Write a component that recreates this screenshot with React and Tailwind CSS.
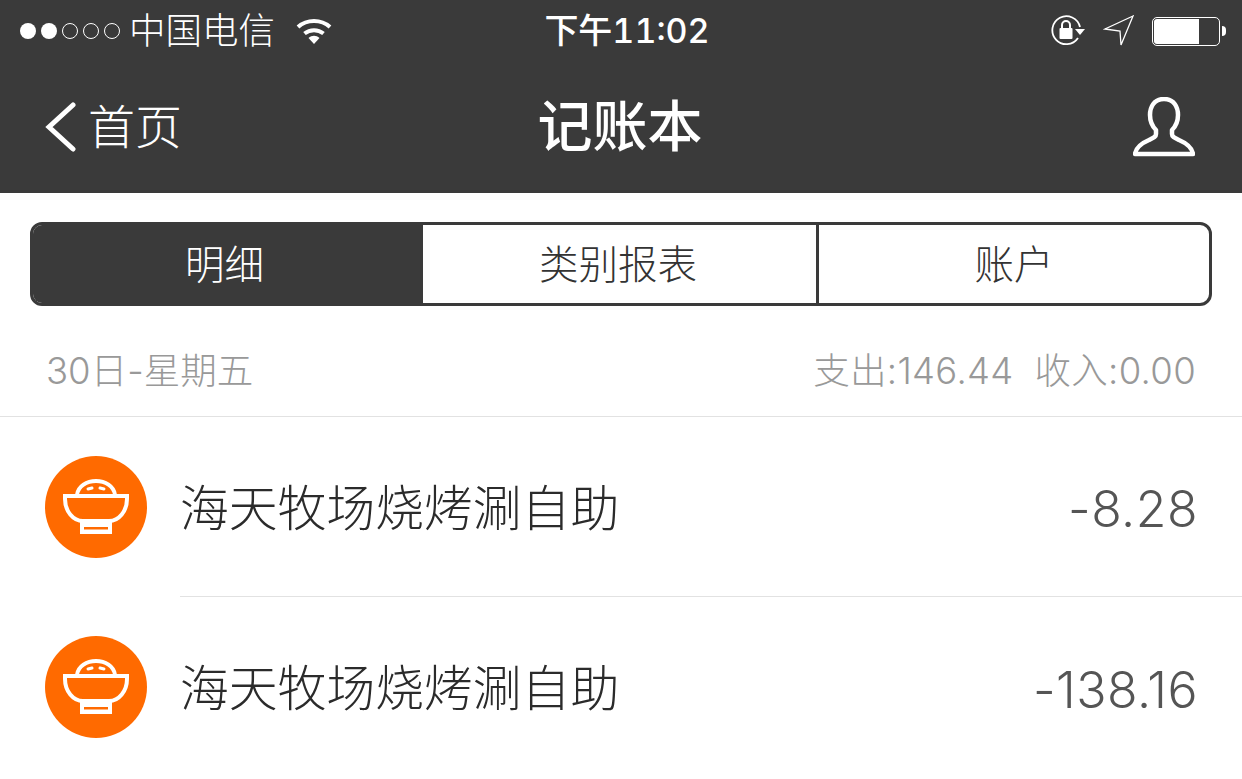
import React from 'react';

const fontStack = 'Inter, "Noto Sans CJK SC", "Noto Sans", sans-serif';

const records = [
    { id: 1, name: '海天牧场烧烤涮自助', amount: '-8.28' },
    { id: 2, name: '海天牧场烧烤涮自助', amount: '-138.16' },
];

const SignalDots = () => (
    <div className="flex items-center gap-[5px]">
        <span className="h-4 w-4 rounded-full bg-white" />
        <span className="h-4 w-4 rounded-full bg-white" />
        <span className="h-4 w-4 rounded-full border border-white" />
        <span className="h-4 w-4 rounded-full border border-white" />
        <span className="h-4 w-4 rounded-full border border-white" />
    </div>
);

const WifiIcon = () => (
    <svg width="38" height="30" viewBox="0 0 38 30" fill="none" stroke="white" strokeWidth="4">
        <path d="M3 11 C12 3 26 3 35 11" />
        <path d="M9.500 17.500 C15 13 23 13 28.500 17.500" />
        <path d="M13.500 22 L19 28 L24.500 22 C21 19 17 19 13.500 22 Z" fill="white" stroke="none" />
    </svg>
);

const RotationLockIcon = () => (
    <svg width="36" height="32" viewBox="0 0 36 32" fill="none">
        <path d="M28 23 A14 14 0 1 1 30 12" stroke="white" strokeWidth="1.800" />
        <path d="M25 14 L35 14 L30 20 Z" fill="white" />
        <rect x="9.500" y="13" width="13" height="11" rx="1" fill="white" />
        <path d="M12 13 V10 A4 4 0 0 1 20 10 V13" stroke="white" strokeWidth="2" />
    </svg>
);

const LocationIcon = () => (
    <svg width="32" height="32" viewBox="0 0 32 32" fill="none" stroke="white" strokeWidth="1.300">
        <path d="M30 1 L2 14 L17 16 L18 30 Z" strokeLinejoin="miter" />
    </svg>
);

const BatteryIcon = () => (
    <div className="flex items-center gap-[2px]">
        <div className="flex h-[29px] w-[68px] rounded-[5px] border border-white p-[1px]">
            <div className="w-[45px] rounded-l-[3px] bg-white" />
        </div>
        <div className="h-[10px] w-[4px] rounded-r-full bg-white" />
    </div>
);

const BackIcon = () => (
    <svg width="32" height="50" viewBox="0 0 32 50" fill="none" stroke="white" strokeWidth="5" strokeLinecap="round">
        <path d="M28 3 L4 25 L28 47" />
    </svg>
);

const UserIcon = () => (
    <svg width="62" height="60" viewBox="0 0 62 60" fill="none" stroke="white" strokeWidth="4.500" strokeLinejoin="round">
        <path d="M31 2 C21 2 17 10 17 18 C17 25 20 30 23 33 L23 37 C23 40 20 41 16 43 C9 46 3 50 2 57 L60 57 C59 50 53 46 46 43 C42 41 39 40 39 37 L39 33 C42 30 45 25 45 18 C45 10 41 2 31 2 Z" />
    </svg>
);

const BowlIcon = () => (
    <svg width="66" height="56" viewBox="0 0 66 56" fill="none" stroke="white">
        <path d="M14 16 C15 7 24 2 33 2 C42 2 51 7 52 16" strokeWidth="4" />
        <path d="M25 10 L29 9 M37 9 L41 10" strokeWidth="3" strokeLinecap="round" />
        <path d="M2 17 L64 17 L64 20 C64 32 56 42 46 42 L20 42 C10 42 2 32 2 20 Z" strokeWidth="4" />
        <rect x="17" y="43" width="32" height="12" fill="white" stroke="none" />
        <rect x="21" y="48" width="24" height="2.500" fill="#ff6a00" stroke="none" />
    </svg>
);

const RecordRow = ({ record, last }) => (
    <div className="flex h-[180px] items-center pl-[45px]">
        <div className="flex h-[102px] w-[102px] shrink-0 items-center justify-center rounded-full bg-[#ff6a00]">
            <BowlIcon />
        </div>
        <div className={`ml-[33px] flex h-full flex-1 items-center justify-between pr-[44px] pt-[5px] ${last ? '' : 'border-b border-[#e2e2e2]'}`}>
            <span className="text-[48.800px] font-light leading-none text-[#2b2b2b]">{record.name}</span>
            <span className="text-[50px] font-light leading-none tracking-[0.500px] text-[#555555]">{record.amount}</span>
        </div>
    </div>
);

export default function App() {
    return (
        <div className="h-[779px] w-[1242px] overflow-hidden bg-white" style={{ fontFamily: fontStack }}>
            <header className="h-[193px] bg-[#3a3a3a] text-white">
                <div className="flex h-[62px] items-center justify-between pl-[20px] pr-[16px]">
                    <div className="flex flex-1 items-center">
                        <SignalDots />
                        <span className="ml-[9px] text-[36.500px] font-light leading-none">中国电信</span>
                        <span className="ml-[20px]"><WifiIcon /></span>
                    </div>
                    <span className="pl-[8px] text-[34px] font-medium leading-none tabular-nums">下午11:02</span>
                    <div className="flex flex-1 items-center justify-end gap-[17px]">
                        <RotationLockIcon />
                        <LocationIcon />
                        <BatteryIcon />
                    </div>
                </div>
                <div className="flex h-[129px] items-center justify-between pl-[45px] pr-[47px]">
                    <div className="flex w-[300px] items-center">
                        <BackIcon />
                        <span className="ml-[11px] text-[47px] font-light leading-none">首页</span>
                    </div>
                    <span className="text-[55px] font-medium leading-none">记账本</span>
                    <div className="flex w-[300px] justify-end">
                        <UserIcon />
                    </div>
                </div>
            </header>

            <div className="px-[30px] pt-[29px]">
                <div className="flex h-[84px] overflow-hidden rounded-[12px] border-[3px] border-[#3a3a3a] text-[39.500px] font-light leading-none text-[#333333]">
                    <div className="flex w-[387px] items-center justify-center bg-[#3a3a3a] pr-[4px] pt-[4px] text-white">明细</div>
                    <div className="flex w-[396px] items-center justify-center border-l-[3px] border-[#3a3a3a] pr-[3px] pt-[4px]">类别报表</div>
                    <div className="flex flex-1 items-center justify-center border-l-[3px] border-[#3a3a3a] pt-[4px]">账户</div>
                </div>
            </div>

            <div className="flex h-[111px] items-center justify-between border-b border-[#e2e2e2] px-[46px] pt-[20px] text-[36.500px] font-light leading-none text-[#999999]">
                <span>30日-星期五</span>
                <span className="tracking-[0.300px]">支出:146.44<span className="ml-[21px]">收入:0.00</span></span>
            </div>

            {records.map((record, i) => (
                <RecordRow key={record.id} record={record} last={i === records.length - 1} />
            ))}
        </div>
    );
}
